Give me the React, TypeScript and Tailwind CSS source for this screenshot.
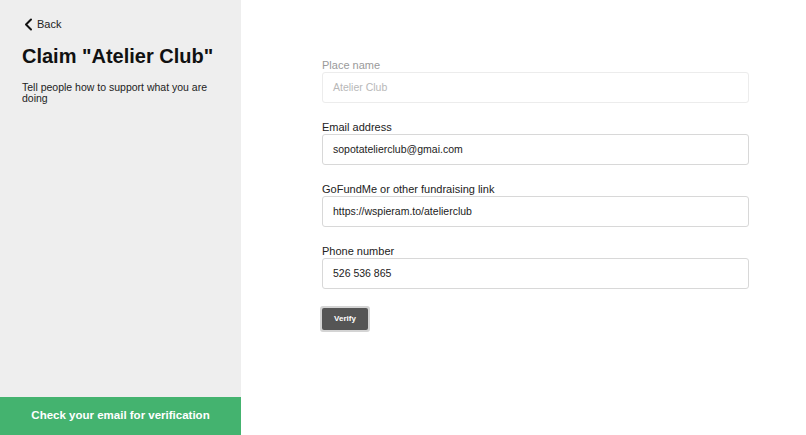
import * as React from 'react'

const FONT = { fontFamily: '"Liberation Sans", Arial, sans-serif' }

interface Field {
    label: string
    value: string
    disabled?: boolean
}

const FIELDS: Field[] = [
    { label: 'Place name', value: 'Atelier Club', disabled: true },
    { label: 'Email address', value: 'sopotatelierclub@gmai.com' },
    { label: 'GoFundMe or other fundraising link', value: 'https://wspieram.to/atelierclub' },
    { label: 'Phone number', value: '526 536 865' },
]

function BackIcon() {
    return (
        <svg width="9" height="13" viewBox="0 0 9 13" fill="none">
            <path d="M7 1.5 L2 6.5 L7 11.5" stroke="#111" strokeWidth="2" strokeLinecap="round" strokeLinejoin="round" />
        </svg>
    )
}

export default function App() {
    return (
        <div className="flex w-[806px] h-[435px] bg-white overflow-hidden" style={FONT}>
            {/* Sidebar */}
            <div className="flex flex-col w-[241px] shrink-0 bg-[#eeeeee]">
                <div className="px-[22px] pt-[16px]">
                    <div className="flex items-center gap-[4px] pl-[2px] text-[11px] text-[#222]">
                        <BackIcon />
                        <span>Back</span>
                    </div>
                    <h1 className="mt-[11px] text-[20px] leading-[24px] font-bold text-[#111]">
                        Claim "Atelier Club"
                    </h1>
                    <p className="mt-[14px] text-[10.5px] leading-[11px] text-[#222] w-[205px]">
                        Tell people how to support what you are doing
                    </p>
                </div>
                <div className="mt-auto h-[38px] flex items-center justify-center bg-[#44b36f] text-white text-[11.5px] font-bold">
                    Check your email for verification
                </div>
            </div>

            {/* Form */}
            <div className="flex-1 pl-[81px] pt-[59px]">
                <div className="flex flex-col gap-[18px] w-[427px]">
                    {FIELDS.map((f) => (
                        <div key={f.label}>
                            <div className={`text-[11px] leading-[13px] ${f.disabled ? 'text-[#9a9a9a]' : 'text-[#222]'}`}>
                                {f.label}
                            </div>
                            <div
                                className={`h-[31px] flex items-center px-[10px] rounded-[3px] border text-[10.5px] ${
                                    f.disabled ? 'border-[#ececec] text-[#b8b8b8]' : 'border-[#d8d8d8] text-[#222]'
                                }`}
                            >
                                {f.value}
                            </div>
                        </div>
                    ))}
                </div>
                <div className="mt-[17px] ml-[-2px] inline-flex p-[2px] rounded-[3px] bg-[#d4d4d4]">
                    <div className="w-[46px] h-[22px] flex items-center justify-center rounded-[2px] bg-[#555555] text-white text-[8px] font-bold">
                        Verify
                    </div>
                </div>
            </div>
        </div>
    )
}
